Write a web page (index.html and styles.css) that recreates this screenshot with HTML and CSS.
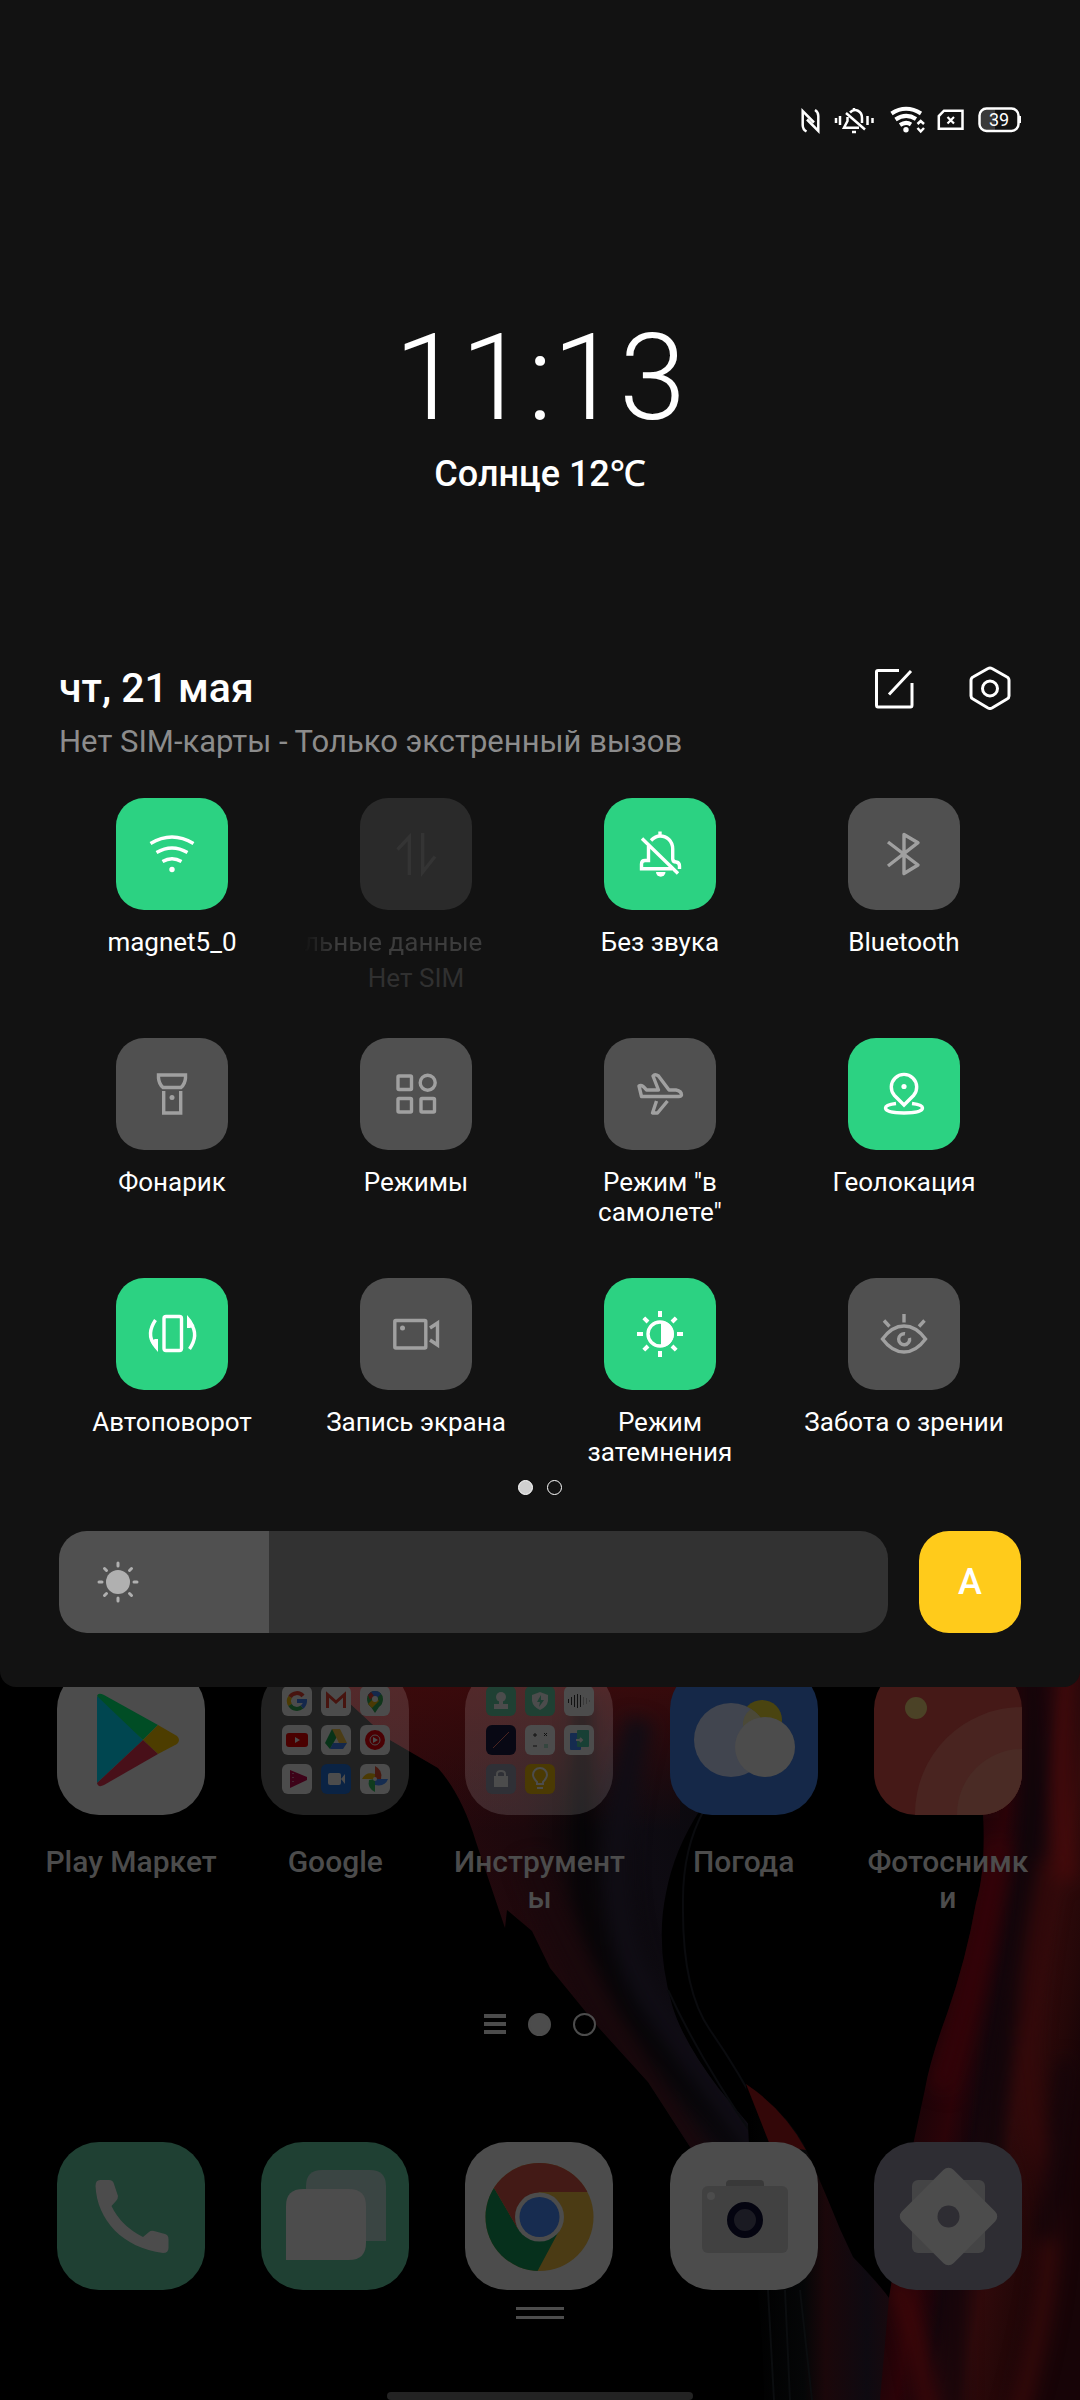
FILE: index.html
```html
<!DOCTYPE html>
<html lang="ru">
<head>
    <meta charset="UTF-8">
    <meta name="viewport" content="width=device-width, initial-scale=1.0">
    <title>Панель быстрых настроек</title>
    <link rel="stylesheet" href="styles.css">
</head>
<body>
    <div class="screen">
        <section class="panel">
            <div class="status-bar">
                <svg class="line" width="22" height="30" viewBox="20 16 22 30" aria-label="NFC">
                    <path d="M26.500 41.500Q22.700 39.500 22.700 35V21L34 32.500M35 20Q38.300 22 38.300 26V41L27 29.500" stroke-width="2.500"/>
                </svg>
                <svg class="line" width="46" height="30" viewBox="52 16 46 30" aria-label="Без звука">
                    <path d="M56 28V33M60 26V35M87.500 26V35M92.500 28V33" stroke-width="2.500"/>
                    <path d="M66 23L85 39.500M70 22.500C75 17.500 82 21 82 28V33M67.500 27V31L64 37.700H79M74 18V20M72 42H76" stroke-width="2.500"/>
                </svg>
                <svg class="line" width="38" height="30" viewBox="108 16 38 30" aria-label="Wi-Fi">
                    <path d="M111.500 23.500Q126 14 141 23.500M115.500 29.500Q126 22.500 136 29M120 35Q126 31 131 34.500" stroke-width="4"/>
                    <circle class="solid" cx="126" cy="39.700" r="2.700"/>
                    <path d="M137.500 34L140.700 31L144 34M137.500 38L140.700 41.500L144 38" stroke-width="2.500"/>
                </svg>
                <svg class="line" width="30" height="30" viewBox="156 16 30 30" aria-label="Нет SIM">
                    <path d="M164 20.700H182.500V38.800H158.800V26Z" stroke-width="2.500"/>
                    <path d="M167.500 27L174 33.500M174 27L167.500 33.500" stroke-width="2.200"/>
                </svg>
                <svg width="45" height="30" viewBox="196 16 45 30" aria-label="Заряд">
                    <path class="charge" d="M215 19H206Q200 19 200 25V34Q200 40 206 40H215Z"/>
                    <rect class="battery" x="199.500" y="18.500" width="39" height="22.500" rx="7"/>
                    <rect class="solid" x="239" y="26" width="2" height="7"/>
                    <text class="battery-text" x="219" y="36" text-anchor="middle">39</text>
                </svg>
            </div>

            <div class="clock">11:13</div>
            <div class="weather">Солнце 12℃</div>

            <header class="header">
                <div>
                    <h1>чт, 21 мая</h1>
                    <p>Нет SIM-карты - Только экстренный вызов</p>
                </div>
                <div class="header-buttons">
                    <button class="icon-button" aria-label="Изменить">
                        <svg class="line" width="46" height="46" viewBox="0 0 46 46"><path d="M28 6.500H7Q5.500 6.500 5.500 8V41Q5.500 43 7 43H39.500Q41 43 41 41V19M18 30.500L40 7"/></svg>
                    </button>
                    <button class="icon-button" aria-label="Настройки">
                        <svg class="line" width="46" height="46" viewBox="0 0 46 46"><path d="M21 4.500Q23 3.300 25 4.500L40 13Q42 14 42 16.500V32Q42 34 40 35L25 44Q23 45 21 44L6 35Q4 34 4 32V16.500Q4 14 6 13Z"/><circle cx="23" cy="24.500" r="7.500"/></svg>
                    </button>
                </div>
            </header>

            <div class="tiles">
                <button class="tile on">
                    <svg class="tile-icon" viewBox="0 0 112 112"><path d="M34.500 45.500Q56 32.500 77.500 45.500M40.500 54.500Q56 45.500 71.500 54.500M46.500 63.500Q56 58 65.500 63.500"/><circle class="fill" cx="56" cy="71.500" r="2.700"/></svg>
                    <span class="tile-label">magnet5_0</span>
                </button>
                <button class="tile disabled" disabled>
                    <svg class="tile-icon" viewBox="0 0 112 112"><path d="M37.500 51.500L49.300 39V77M62.700 35V74L75 58.500"/></svg>
                    <span class="tile-marquee">льные данные</span>
                    <span class="tile-note">Нет SIM</span>
                </button>
                <button class="tile on">
                    <svg class="tile-icon" viewBox="0 0 112 112"><path d="M38 40.500L74 75.500M47 42.500C50 39.500 53 38 56 38C63 38 68.700 43 68.700 51V61Q69 64 72 64Q75.500 64.500 75.500 68V71M44.500 48V62.500H41Q37.500 62.500 37.500 66V70.700H68M56 33.500V38"/><path class="fill" d="M52 74H61.500A4.700 4.700 0 0 1 52 74"/></svg>
                    <span class="tile-label">Без звука</span>
                </button>
                <button class="tile">
                    <svg class="tile-icon" viewBox="0 0 112 112"><path stroke-linejoin="round" d="M40 44L70 67L56 75.500V36.500L70 44.700L40 68"/></svg>
                    <span class="tile-label">Bluetooth</span>
                </button>

                <button class="tile">
                    <svg class="tile-icon" viewBox="0 0 112 112"><path d="M42.500 37H69.500V40Q69 46 65 49.500H47Q43 46 42.500 40ZM47.700 53V75H64.700V53"/><circle class="fill" cx="56" cy="59.500" r="2.500"/></svg>
                    <span class="tile-label">Фонарик</span>
                </button>
                <button class="tile">
                    <svg class="tile-icon" viewBox="0 0 112 112"><rect x="38" y="38" width="13.500" height="13.500" rx="1"/><circle cx="67.700" cy="44.700" r="7.500"/><rect x="38" y="60.500" width="13.500" height="13.500" rx="1"/><rect x="61" y="60.500" width="13.500" height="13.500" rx="1"/></svg>
                    <span class="tile-label">Режимы</span>
                </button>
                <button class="tile">
                    <svg class="tile-icon" viewBox="0 0 112 112"><path stroke-linejoin="round" d="M35 48Q38 46 42.500 52H54.500L49 38Q51 35.500 54.500 38L65 52H72Q77.500 53 77.500 57Q77 58.500 75 58.500H37.500ZM52.500 63L48.500 75H53.500L63.500 63"/></svg>
                    <span class="tile-label">Режим "в самолете"</span>
                </button>
                <button class="tile on">
                    <svg class="tile-icon" viewBox="0 0 112 112"><path d="M56 67L46.500 57.500A12.700 12.700 0 1 1 65.500 57.500ZM48 65.500C40 66.500 37.500 68 37.500 70C37.500 73.500 46 75 56 75S74.500 73.500 74.500 70C74.500 68 72 66.500 64 65.500"/><circle class="fill" cx="56" cy="48.500" r="2.600"/></svg>
                    <span class="tile-label">Геолокация</span>
                </button>

                <button class="tile on">
                    <svg class="tile-icon" viewBox="0 0 112 112"><rect x="48" y="38.500" width="17.500" height="34" rx="2"/><path d="M39.500 42Q30 56 38.500 67M73.500 71Q83 57 75 46"/><path class="fill" d="M42 74V61H39L34.500 63Q37 69 42 74ZM71 37V50H74L78.500 48Q76 42 71 37Z"/></svg>
                    <span class="tile-label">Автоповорот</span>
                </button>
                <button class="tile">
                    <svg class="tile-icon" viewBox="0 0 112 112"><rect x="34.800" y="42.500" width="31" height="27.500" rx="1"/><path d="M70 50L77.500 45V67L70 62"/><circle class="fill" cx="42.500" cy="50" r="2.500"/></svg>
                    <span class="tile-label">Запись экрана</span>
                </button>
                <button class="tile on">
                    <svg class="tile-icon" viewBox="0 0 112 112"><circle cx="56" cy="56" r="12"/><path class="fill" d="M57 43A12.500 12.500 0 0 1 57 69Z"/><path stroke-width="4" d="M56 33V39M56 73V79M33 56H39M73 56H79M39.800 39.800L44 44M68 68L72.200 72.200M39.800 72.200L44 68M68 44L72.200 39.800"/></svg>
                    <span class="tile-label">Режим затемнения</span>
                </button>
                <button class="tile">
                    <svg class="tile-icon" viewBox="0 0 112 112"><path d="M34.500 61Q44 48 56 48T77.500 61Q68 74 56 74T34.500 61ZM57 55.800A5.500 5.500 0 1 0 61.500 60M56 36V44.500M36 42.500L41.500 48.500M76.500 42.500L71 48.500"/></svg>
                    <span class="tile-label">Забота о зрении</span>
                </button>
            </div>

            <div class="pages">
                <span class="page current"></span>
                <span class="page"></span>
            </div>

            <div class="brightness">
                <div class="slider">
                    <input type="range" min="0" max="100" value="25" aria-label="Яркость">
                    <svg class="sun" width="48" height="48" viewBox="-24 -24 48 48"><circle r="12"/><path d="M0-16V-19M0 16V19M-16 0H-19M16 0H19M-11.500-11.500L-13.500-13.500M11.500 11.500L13.500 13.500M-11.500 11.500L-13.500 13.500M11.500-11.500L13.500-13.500"/></svg>
                </div>
                <button class="auto">A</button>
            </div>
        </section>

        <main class="home">
            <svg class="wallpaper" viewBox="0 1667 1080 733" preserveAspectRatio="xMidYMid slice" aria-hidden="true">
                <defs>
                    <linearGradient id="band" gradientUnits="userSpaceOnUse" x1="430" y1="1850" x2="700" y2="1780">
                        <stop offset="0" stop-color="#26090d"/>
                        <stop offset=".35" stop-color="#1c080c"/>
                        <stop offset=".55" stop-color="#0a070a"/>
                        <stop offset=".75" stop-color="#0e0b12"/>
                        <stop offset="1" stop-color="#0b090e"/>
                    </linearGradient>
                    <linearGradient id="glow" x1="0" y1="0" x2="0" y2="1">
                        <stop offset="0" stop-color="#3d0a0b"/>
                        <stop offset="1" stop-color="#3d0a0b" stop-opacity="0"/>
                    </linearGradient>
                    <linearGradient id="mass" gradientUnits="userSpaceOnUse" x1="920" y1="2050" x2="1080" y2="2080">
                        <stop offset="0" stop-color="#170408"/>
                        <stop offset=".25" stop-color="#2b0308"/>
                        <stop offset=".42" stop-color="#14050b"/>
                        <stop offset=".65" stop-color="#300a0b"/>
                        <stop offset=".85" stop-color="#240708"/>
                        <stop offset="1" stop-color="#170407"/>
                    </linearGradient>
                    <linearGradient id="foot" gradientUnits="userSpaceOnUse" x1="750" y1="2300" x2="930" y2="2300">
                        <stop offset="0" stop-color="#000"/>
                        <stop offset=".3" stop-color="#050607"/>
                        <stop offset=".42" stop-color="#1b070a"/>
                        <stop offset=".65" stop-color="#0e0a11"/>
                        <stop offset="1" stop-color="#2a0708"/>
                    </linearGradient>
                    <filter id="soft" filterUnits="userSpaceOnUse" x="0" y="1600" width="1200" height="900" color-interpolation-filters="sRGB"><feGaussianBlur stdDeviation="9"/></filter>
                    <clipPath id="left"><path d="M313 1667Q350 1705 390 1740L438 1768Q462 1795 476 1842L505 1928L507 1910L532 1931L550 1968L599 2028L648 2082L692 2150H770L719 2089Q682 2040 672 2005Q655 1945 666 1893Q674 1850 700 1810V1667Z"/></clipPath>
                    <clipPath id="right"><path d="M1000 1667L983 1814Q986 1870 976 1903Q966 1960 947 2014Q930 2060 925 2089L913 2145L889 2298L880 2400H1080V1667Z"/></clipPath>
                </defs>
                <g clip-path="url(#left)">
                    <path fill="url(#band)" d="M290 1667H780V2150H290Z"/>
                    <path fill="url(#glow)" d="M290 1667H680V1830H290Z"/>
                    <g fill="none" filter="url(#soft)">
                        <path stroke="#050406" stroke-width="16" d="M582 1700V1890Q600 1980 680 2080L780 2200"/>
                        <path stroke="#100d15" stroke-width="26" d="M640 1720Q590 1900 650 2000L780 2180"/>
                        <path stroke="#1a080c" stroke-width="24" d="M530 1860Q580 2000 720 2180"/>
                    </g>
                </g>
                <path fill="none" stroke="#0a0b0e" stroke-width="2" d="M704 1810Q682 1850 683 1905Q682 1990 710 2030T764 2120M668 1990Q700 2060 756 2140"/>
                <path fill="url(#foot)" d="M746 2084Q785 2110 804 2145Q820 2180 840 2229L853 2257Q880 2285 889 2298L920 2250L960 2400H764Q764 2340 755 2270Z"/>
                <path fill="#330708" d="M746 2084Q785 2110 806 2150L770 2145Z"/>
                <path fill="none" stroke="#0b0d0f" stroke-width="2" d="M768 2290L774 2400M785 2290L790 2400M800 2290L812 2400"/>
                <g clip-path="url(#right)">
                    <path fill="url(#mass)" d="M870 1667H1080V2400H870Z"/>
                    <g fill="none" filter="url(#soft)">
                        <path stroke="#480a0b" stroke-width="18" d="M1070 1640Q1056 1750 1066 1880"/>
                        <path stroke="#10050a" stroke-width="20" d="M1030 1640Q1040 1850 1010 2000T1000 2200"/>
                        <path stroke="#34090a" stroke-width="20" d="M1050 1860Q1010 2060 1040 2150T1010 2440"/>
                        <path stroke="#14050a" stroke-width="16" d="M1066 2060L1046 2240M955 2260V2440"/>
                        <path stroke="#3d0709" stroke-width="18" d="M895 2280Q925 2350 930 2440"/>
                        <path stroke="#330308" stroke-width="24" d="M1000 1840Q975 1980 940 2090"/>
                    </g>
                </g>
            </svg>

            <div class="apps">
                <button class="app">
                    <svg class="app-icon" viewBox="0 0 148 148">
                        <path fill="#4c4c4c" d="M0 0H148V148H0Z"/>
                        <path fill="#004650" d="M40 30V116L86 73L43 27Z"/>
                        <path fill="#004d25" d="M40 29Q41 25 47 28L101 58L86 73Z"/>
                        <path fill="#4d3d00" d="M101 58L120 69Q124 73 120 77L101 87L86 73Z"/>
                        <path fill="#481019" d="M40 116Q41 121 47 118L101 87L86 73Z"/>
                    </svg>
                    <span>Play Маркет</span>
                </button>
                <button class="app">
                    <svg class="app-icon folder" viewBox="-1 0 148 148">
                        <g fill="#4c4c4c">
                            <rect x="20" y="19" width="30" height="30" rx="6"/><rect x="59" y="19" width="30" height="30" rx="6"/><rect x="98" y="19" width="30" height="30" rx="6"/>
                            <rect x="20" y="58" width="30" height="30" rx="6"/><rect x="59" y="58" width="30" height="30" rx="6"/><rect x="98" y="58" width="30" height="30" rx="6"/>
                            <rect x="20" y="97" width="30" height="30" rx="6"/><rect x="98" y="97" width="30" height="30" rx="6"/>
                        </g>
                        <g fill="none" stroke-width="4">
                            <path stroke="#47140f" d="M28 30A8 8 0 0 1 41 29"/><path stroke="#4b3a03" d="M28 30A8 8 0 0 0 28 38"/>
                            <path stroke="#10351a" d="M28 38A8 8 0 0 0 40 40"/><path stroke="#14284b" d="M40 40Q43 38 43 34H35"/>
                            <path stroke="#47140f" stroke-width="3" d="M65.500 41V27.500L74 35L82.500 27.500V41"/>
                        </g>
                        <path fill="#10351a" d="M105 32A8 8 0 1 1 121 32Q121 37 117 40L113 46L109 40Q105 37 105 32Z"/>
                        <path fill="#14284b" d="M113 24A8 8 0 0 0 106 28L113 33L119 27Q117 24 113 24Z"/><path fill="#47140f" d="M106 28L109 25L112 29L108 33Z"/><path fill="#4b3a03" d="M106 37L114 29L117 34L110 41Z"/><circle cx="113" cy="32" r="3" fill="#4c4c4c"/>
                        <rect x="24" y="66" width="22" height="14" rx="3" fill="#4a0000"/><path fill="#4c4c4c" d="M33 70V76L38 73Z"/>
                        <path fill="#073318" d="M70 62L77 66L68 82L63 76Z"/><path fill="#4b3c15" d="M70 62H78L85 76H77Z"/><path fill="#14284b" d="M71 76H85L81 82H68Z"/>
                        <circle cx="113" cy="73" r="10" fill="#4a0003"/><circle cx="113" cy="73" r="5" fill="none" stroke="#4c4c4c"/><path fill="#4c4c4c" d="M111 70V76L116 73Z"/>
                        <path fill="#3d0218" d="M28 103L45 110V113L28 121Z"/><path stroke="#4c4c4c" stroke-dasharray="1 3" d="M31 106V118"/>
                        <rect x="59" y="97" width="30" height="30" rx="6" fill="#0a2344"/><rect x="66" y="106" width="13" height="12" rx="2" fill="#4c4c4c"/><path fill="#4c4c4c" d="M79 112L83 107V117Z"/>
                        <path fill="#47180f" d="M113 112V99Q121 103 119 112Z"/><path fill="#152c50" d="M113 112H126Q123 120 113 118Z"/><path fill="#103c1e" d="M113 112V125Q105 121 107 113Z"/><path fill="#4b3a03" d="M113 112H100Q104 104 113 107Z"/><circle cx="113" cy="112" r="2" fill="#4c4c4c"/>
                    </svg>
                    <span>Google</span>
                </button>
                <button class="app">
                    <svg class="app-icon folder" viewBox="-1 0 148 148">
                        <g fill="#1f4033"><rect x="20" y="19" width="30" height="30" rx="6"/><rect x="59" y="19" width="30" height="30" rx="6"/></g>
                        <g fill="#4c4c4c"><rect x="98" y="19" width="30" height="30" rx="6"/><rect x="59" y="58" width="30" height="30" rx="6"/><rect x="98" y="58" width="30" height="30" rx="6"/></g>
                        <rect x="20" y="58" width="30" height="30" rx="6" fill="#080814"/><rect x="20" y="97" width="30" height="30" rx="6" fill="#2f3036"/><rect x="59" y="97" width="30" height="30" rx="6" fill="#4b3a03"/>
                        <g fill="#4c4c4c"><circle cx="35" cy="30" r="5"/><path d="M33 33H37V37H42V42H28V37H33Z"/><path d="M74 25L82 28V34Q81 40 74 43Q67 40 66 34V28Z"/><path d="M28 109H42V120H28Z"/></g>
                        <path fill="#1f4033" d="M75 28L71 35H74L73 40L78 33H75Z"/>
                        <g fill="none">
                            <path stroke="#111" d="M102.500 32V36M105.500 30V38M108.500 28V40M111.500 27V41M114.500 28V40"/>
                            <path stroke="#3a3a3a" d="M117.500 30V38M120.500 31V37M123.500 33V35"/>
                            <path stroke="#4a2420" d="M27 81L43 65"/>
                            <path stroke="#111" d="M67 68H71M69 66V70M78 66L81 69M81 66L78 69M67 79H71"/>
                            <path stroke="#1f4033" d="M78 78H82M78 80H82"/>
                        </g>
                        <rect x="104" y="66" width="11" height="17" rx="1" fill="#152c50"/><rect x="111" y="63" width="12" height="17" rx="1" fill="#184035"/><path stroke="#4c4c4c" stroke-width="2" d="M110 73H116M114 71L116 73L114 75" fill="none"/>
                        <g fill="none" stroke="#4c4c4c" stroke-width="2"><path d="M31 109V107Q31 104 35 104T39 107V109M71 115Q67 111 67 108A7 7 0 0 1 81 108Q81 111 77 115V117H71ZM71 121H77"/></g>
                    </svg>
                    <span>Инструменты</span>
                </button>
                <button class="app">
                    <svg class="app-icon" viewBox="0 0 148 148">
                        <path fill="#152848" d="M0 0H148V148H0Z"/>
                        <circle cx="92" cy="53" r="20" fill="#4a4410"/>
                        <circle cx="61" cy="73" r="37" fill="#41454f"/>
                        <path fill="#4b4938" d="M94 56A37 37 0 0 0 81 42A20 20 0 0 0 73 60A30 30 0 0 1 94 56Z"/>
                        <circle cx="95" cy="80" r="30" fill="#4c4c4c"/>
                    </svg>
                    <span>Погода</span>
                </button>
                <button class="app">
                    <svg class="app-icon" viewBox="0 0 148 148">
                        <path fill="#451917" d="M0 0H148V148H0Z"/>
                        <circle cx="148" cy="147" r="107" fill="#492420"/>
                        <circle cx="148" cy="147" r="65" fill="#4a2b25"/>
                        <circle cx="42" cy="41" r="11" fill="#4b4226"/>
                    </svg>
                    <span>Фотоснимки</span>
                </button>
            </div>

            <div class="home-pages">
                <svg width="22" height="24" viewBox="0 0 22 24"><path d="M0 4H22M0 12H22M0 20H22"/></svg>
                <span class="home-page current"></span>
                <span class="home-page"></span>
            </div>

            <nav class="apps dock">
                <button class="app" aria-label="Телефон">
                    <svg class="app-icon" viewBox="0 0 148 148">
                        <path fill="#1f4033" d="M0 0H148V148H0Z"/>
                        <path fill="#4c4c4c" d="M43 38H52Q56 38 57 42L61 54Q61 57 59 59L54.500 64Q64 84 86 95L92 90Q94 88 97 89L108 92Q111.500 93 111.500 97V106Q111.500 111 106 111C66 106 40 78 38.500 44Q38.500 38 43 38Z"/>
                    </svg>
                </button>
                <button class="app" aria-label="Сообщения">
                    <svg class="app-icon" viewBox="0 0 148 148">
                        <path fill="#1f4033" d="M0 0H148V148H0Z"/>
                        <path fill="#3a4543" d="M45 44Q45 28 61 28H109Q125 28 125 44V99H45Z"/>
                        <path fill="#4c4c4c" d="M25 64Q25 47 42 47H88Q105 47 105 64V101Q105 118 88 118H25Z"/>
                    </svg>
                </button>
                <button class="app" aria-label="Chrome">
                    <svg class="app-icon" viewBox="0 0 148 148">
                        <clipPath id="disc"><circle cx="74.500" cy="75" r="54"/></clipPath>
                        <path fill="#4c4c4c" d="M0 0H148V148H0Z"/>
                        <g clip-path="url(#disc)">
                            <path fill="#4b3b14" d="M0 0H148V148H0Z"/>
                            <path fill="#06301c" d="M0 0L29 46L53 87L74 75L95 87L72 130L0 148Z"/>
                            <path fill="#431a16" d="M0 0L29 46L53 87L74 50H148V0Z"/>
                        </g>
                        <circle cx="74.500" cy="75" r="24.500" fill="#4c4c4c"/>
                        <circle cx="74.500" cy="75" r="20" fill="#172c50"/>
                    </svg>
                </button>
                <button class="app" aria-label="Камера">
                    <svg class="app-icon" viewBox="0 0 148 148">
                        <path fill="#4c4c4c" d="M0 0H148V148H0Z"/>
                        <rect x="56" y="38" width="38" height="16" rx="4" fill="#393939"/>
                        <rect x="32" y="44" width="86" height="67" rx="6" fill="#414141"/>
                        <circle cx="41" cy="54" r="4" fill="#4c4c4c"/>
                        <circle cx="75" cy="78" r="14.500" fill="#1a1a22" stroke="#040410" stroke-width="7"/>
                    </svg>
                </button>
                <button class="app" aria-label="Настройки">
                    <svg class="app-icon" viewBox="0 0 148 148">
                        <path fill="#2e2d33" d="M0 0H148V148H0Z"/>
                        <rect x="38" y="38" width="73" height="73" rx="6" fill="#444445"/>
                        <rect x="38" y="38" width="73" height="73" rx="7" fill="#4c4c4c" transform="rotate(45 74.500 74.500)"/>
                        <circle cx="74.500" cy="74.500" r="11" fill="#2e2d33"/>
                    </svg>
                </button>
            </nav>

            <div class="drawer-handle"></div>
            <div class="nav-handle"></div>
        </main>
    </div>
</body>
</html>
```
FILE: styles.css
```css
body {
    margin: 0;
    background-color: #000;
    color: #fff;
    font-family: Roboto, "Noto Sans", sans-serif;
}
button {
    padding: 0;
    border: none;
    background: none;
    color: inherit;
    font-family: inherit;
    cursor: pointer;
}
svg {
    display: block;
}
.screen {
    display: flex;
    flex-direction: column;
    min-height: 100vh;
    overflow: hidden;
}

/* Quick settings panel */
.panel {
    position: relative;
    z-index: 1;
    padding: 106px 59px 54px;
    background-color: #121212;
    border-radius: 0 0 16px 16px;
}
.line {
    fill: none;
    stroke: #fff;
    stroke-width: 3;
}
.solid {
    fill: #fff;
    stroke: none;
}
.status-bar {
    display: flex;
    justify-content: flex-end;
    gap: 10px;
}
.charge {
    fill: #3a3a3a;
}
.battery {
    fill: none;
    stroke: #fff;
    stroke-width: 2.5;
}
.battery-text {
    fill: #fff;
    font: 400 18px Roboto, sans-serif;
}
.clock {
    margin-top: 182px;
    font-size: 120px;
    font-weight: 300;
    line-height: 120px;
    text-align: center;
}
.weather {
    margin-top: 14px;
    font-size: 36px;
    font-weight: 500;
    line-height: 44px;
    text-align: center;
}
.header {
    display: flex;
    justify-content: space-between;
    align-items: flex-start;
    margin-top: 168px;
}
.header h1 {
    margin: 0;
    font-size: 41px;
    font-weight: 500;
    line-height: 48px;
}
.header p {
    margin: 12px 0 0;
    color: #8c8c8c;
    font-size: 31px;
    line-height: 36px;
}
.header-buttons {
    display: flex;
    gap: 50px;
    padding-right: 8px;
}
.tiles {
    display: grid;
    grid-template-columns: repeat(4, 1fr);
    grid-auto-rows: minmax(200px, auto);
    row-gap: 40px;
    margin: 38px -5px 0 -9px;
}
.tile {
    display: flex;
    flex-direction: column;
    align-items: center;
    font-size: 26px;
    line-height: 30px;
}
.tile-icon {
    width: 112px;
    height: 112px;
    margin-bottom: 17px;
    border-radius: 28px;
    background-color: #505050;
    fill: none;
    stroke: #a0a0a0;
    stroke-width: 3.4;
}
.tile-icon .fill {
    fill: #a0a0a0;
    stroke: none;
}
.tile.on .tile-icon {
    background-color: #2cd282;
    stroke: #fff;
}
.tile.on .fill {
    fill: #fff;
}
.tile.disabled .tile-icon {
    background-color: #2a2a2a;
    stroke: #343434;
}
.tile-label {
    max-width: 210px;
}
.tile-marquee {
    box-sizing: border-box;
    width: 224px;
    padding-right: 47px;
    color: #3c3c3c;
    text-align: right;
    white-space: nowrap;
    -webkit-mask-image: linear-gradient(to right, transparent, #000 30px);
    mask-image: linear-gradient(to right, transparent, #000 30px);
}
.tile-note {
    margin-top: 6px;
    color: #303030;
}
.pages {
    display: flex;
    justify-content: center;
    gap: 14px;
    margin-top: 2px;
}
.page {
    box-sizing: border-box;
    width: 15px;
    height: 15px;
    border: 1px solid #fff;
    border-radius: 50%;
}
.page.current {
    background-color: #d0d0d0;
}
.brightness {
    display: flex;
    gap: 31px;
    margin-top: 36px;
}
.slider {
    position: relative;
    flex: 1;
}
.slider input {
    display: block;
    width: 100%;
    height: 102px;
    margin: 0;
    border-radius: 28px;
    background: linear-gradient(to right, #505050 25.3%, #323232 25.3%);
    appearance: none;
    -webkit-appearance: none;
}
.slider input::-webkit-slider-thumb {
    width: 1px;
    height: 102px;
    background: transparent;
    -webkit-appearance: none;
}
.sun {
    position: absolute;
    left: 35px;
    top: 27px;
    fill: #b0b0b0;
    stroke: #b0b0b0;
    stroke-width: 3;
    stroke-linecap: round;
    pointer-events: none;
}
.sun circle {
    stroke: none;
}
.auto {
    width: 102px;
    height: 102px;
    border-radius: 30px;
    background-color: #ffcb1b;
    font-size: 36px;
    font-weight: 500;
}

/* Home screen under the panel */
.home {
    position: relative;
    display: flex;
    flex: 1;
    flex-direction: column;
    margin-top: -20px;
}
.wallpaper {
    position: absolute;
    left: 0;
    top: 0;
    width: 100%;
    height: 100%;
}
.apps {
    position: relative;
    display: grid;
    grid-template-columns: repeat(5, 1fr);
    padding: 0 30px 0 29px;
}
.app {
    display: flex;
    flex-direction: column;
    align-items: center;
    color: #4c4c4c;
    font-size: 30px;
    font-weight: 500;
    line-height: 36px;
}
.app span {
    width: 176px;
    height: 72px;
    margin-top: 29px;
    overflow-wrap: anywhere;
}
.app-icon {
    width: 148px;
    height: 148px;
    border-radius: 42px;
}
.folder {
    background-color: rgba(255, 255, 255, 0.13);
}
.home-pages {
    position: relative;
    display: flex;
    justify-content: center;
    align-items: center;
    gap: 22px;
    margin: 96px 0 106px;
}
.home-pages svg {
    stroke: #4c4c4c;
    stroke-width: 4;
}
.home-page {
    box-sizing: border-box;
    width: 23px;
    height: 23px;
    border: 2px solid #4c4c4c;
    border-radius: 50%;
}
.home-page.current {
    background-color: #4c4c4c;
}
.drawer-handle {
    position: relative;
    box-sizing: border-box;
    width: 48px;
    height: 12px;
    margin: 17px auto 0;
    border: solid #4c4c4c;
    border-width: 3px 0;
}
.nav-handle {
    position: relative;
    width: 306px;
    height: 8px;
    margin: auto auto 0;
    border-radius: 4px;
    background-color: #232323;
}
```
